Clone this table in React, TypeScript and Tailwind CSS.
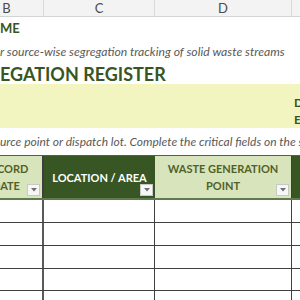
import React from 'react'

const font = { fontFamily: 'Lato, "Open Sans", sans-serif' }

const cols = 'grid grid-cols-[74px_111px_137px_8px] ml-[-30px] w-[330px]'

const FilterBtn = () => (
    <div className="absolute right-[2px] bottom-[2px] w-[13px] h-[12px] bg-[#f7f7f7] border border-[#c8c8c8] flex items-center justify-center">
        <svg width="6" height="4" viewBox="0 0 6 4"><path d="M0 0h6L3 3.5z" fill="#707070" /></svg>
    </div>
)

const DataRow = ({ h }: { h: string }) => (
    <div className={`${cols} ${h} border-b border-[#404040]`}>
        <div className="border-r-2 border-[#5a5a5a]" />
        <div className="border-r border-[#404040]" />
        <div className="border-r border-[#404040]" />
        <div />
    </div>
)

const App = () => {
    return (
        <div className="w-[300px] h-[300px] overflow-hidden bg-white relative" style={font}>
            {/* column letters */}
            <div className={`${cols} h-[17px] bg-[#f3f3f3] border-b border-[#d4d4d4] text-[13px] text-[#4a4a4a] leading-[16px]`}>
                <div className="border-r border-[#dadada] text-center">B</div>
                <div className="border-r border-[#dadada] text-center">C</div>
                <div className="border-r border-[#dadada] text-center">D</div>
                <div />
            </div>

            <div className="h-[24px] flex items-center text-[13px] font-bold text-[#375623]">ME</div>
            <div className="h-[22px] flex items-center text-[12.2px] italic text-[#595959] whitespace-nowrap">r source-wise segregation tracking of solid waste streams</div>
            <div className="h-[21px] flex items-center text-[18px] font-bold text-[#375623] whitespace-nowrap leading-none">EGATION REGISTER</div>

            <div className="h-[44px] bg-[#f3f5c1] pl-[294px] pt-[10px] text-[12px] font-bold text-[#375623] leading-[17px]">
                <div>D</div>
                <div>E</div>
            </div>

            <div className="h-[27px] flex items-center text-[12px] italic text-[#595959] whitespace-nowrap">urce point or dispatch lot. Complete the critical fields on the same</div>

            {/* table header */}
            <div className={`${cols} h-[45px] border-t border-[#595959] border-b-2 border-b-[#5e7a4e] text-[11px] font-bold leading-[17px]`}>
                <div className="relative bg-[#d8e4bc] border-r-2 border-[#3f3f3f] text-[#4f6228] flex flex-col justify-center items-center text-center">
                    <div>RECORD</div>
                    <div>DATE</div>
                    <FilterBtn />
                </div>
                <div className="relative bg-[#375623] text-white flex items-center justify-center">
                    LOCATION / AREA
                    <FilterBtn />
                </div>
                <div className="relative bg-[#d8e4bc] border-r border-[#3f3f3f] text-[#4f6228] flex flex-col items-center justify-center text-center">
                    <div>WASTE GENERATION</div>
                    <div>POINT</div>
                    <FilterBtn />
                </div>
                <div className="bg-[#375623]" />
            </div>

            <DataRow h="h-[23px]" />
            <DataRow h="h-[23px]" />
            <DataRow h="h-[23px]" />
            <DataRow h="h-[22px]" />
            <DataRow h="h-[22px]" />
        </div>
    )
}

export default App
